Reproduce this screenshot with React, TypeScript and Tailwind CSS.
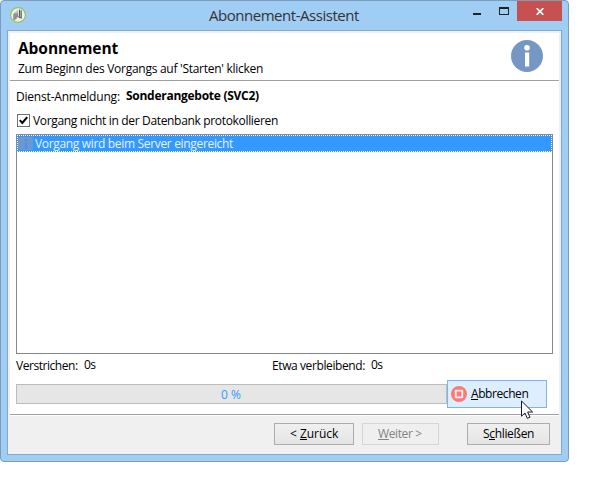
import type { ReactNode } from "react";

function AppIcon() {
  return (
    <svg className="ml-[9px] mt-1.5 h-4 w-4 shrink-0" viewBox="0 0 16 16">
      <circle cx="8" cy="8" r="7.4" fill="#f0f2ec" stroke="#93bf4e" strokeWidth="1.1" />
      <path d="M3.2 7.2 5 5.6l2 .4v5L4.8 13.2l-1.6-.8z" fill="#8f938f" />
      <path d="M5.2 5.4 7.6 2.8l.8.6v5.4L7 10.6z" fill="#bfc3bf" />
      <path d="M7.1 6.2v4" stroke="#5b605f" strokeWidth="0.9" />
      <path d="M9.6 2.6v7.2l1.6 1.6V3.4" fill="#d5d8d3" stroke="#3a403f" strokeWidth="0.9" />
      <path d="M7.8 9.4 10 11" stroke="#555b5a" strokeWidth="0.9" />
    </svg>
  );
}

function InfoIcon() {
  return (
    <svg className="mr-4 mt-[7px] h-8 w-8" viewBox="0 0 32 32">
      <circle cx="16" cy="16" r="16" fill="#7696c4" />
      <circle cx="16" cy="7.7" r="2.8" fill="#fff" />
      <rect x="14" y="12.5" width="4.2" height="14" rx="0.5" fill="#fff" />
    </svg>
  );
}

function Cursor() {
  return (
    <svg className="absolute left-[73px] top-[19px] z-10 h-[20px] w-[13px]" viewBox="0 0 13 20">
      <path
        d="M.5 1v15.3l3.4-3.4 2.4 5.4 2.7-1.1-2.4-5.2h5z"
        fill="#fff"
        stroke="#15152a"
        strokeWidth="1"
      />
    </svg>
  );
}

function PushButton({ className, children }: { className: string; children: ReactNode }) {
  return (
    <button
      className={`flex h-[22px] items-start border pt-[2px] text-[12px] leading-4 whitespace-nowrap ${className}`}
    >
      {children}
    </button>
  );
}

function Key({ children }: { children: string }) {
  return <span className="inline-block h-[14px] border-b border-current leading-4">{children}</span>;
}

export default function App() {
  return (
    <div className="h-[494px] w-[599px] overflow-hidden bg-white font-['Open_Sans','Noto_Sans',sans-serif] text-[12px] leading-4 text-black">
      <div className="flex h-[462px] w-[569px] flex-col rounded-[4px] border border-[#7b9db9] bg-[#a0cdf3]">
        <header className="flex h-[29px] shrink-0 items-start">
          <AppIcon />
          <h1 className="ml-[183px] mt-[4px] w-[160px] text-[15px] leading-5 tracking-[-0.47px] whitespace-nowrap text-[#333]">
            Abonnement-Assistent
          </h1>
          <div className="ml-[104px] mt-3 h-0.5 w-2 bg-[#222]" />
          <div className="ml-[18px] mt-1.5 h-2 w-2.5 border border-t-2 border-[#222]" />
          <div className="ml-2 flex h-5 w-[45px] items-center justify-center bg-[#c75050]">
            <svg className="h-[7px] w-2" viewBox="0 0 8 7">
              <path d="M.7.2 7.3 6.8M7.3.2.7 6.8" stroke="#fff" strokeWidth="1.7" />
            </svg>
          </div>
        </header>
        <main className="mx-1.5 flex h-[425px] shrink-0 flex-col border border-[#83aaca] bg-[#f0f0f0] px-0.5 pt-0.5">
          <section className="flex h-12 shrink-0 justify-between border-b border-[#a0a0a0] bg-white pl-2">
            <div>
              <h2 className="mt-[5px] text-[15.5px] leading-5 font-bold tracking-[-0.07px]">Abonnement</h2>
              <p className="mt-[3px] tracking-[-0.27px] whitespace-nowrap">
                Zum Beginn des Vorgangs auf 'Starten' klicken
              </p>
            </div>
            <InfoIcon />
          </section>
          <section className="flex h-[335px] shrink-0 flex-col bg-white pl-1.5">
            <div className="flex h-6 w-[537px] shrink-0 whitespace-nowrap">
              <span className="mt-2 w-[110px] tracking-[-0.2px]">Dienst-Anmeldung:</span>
              <b className="mt-[7px] tracking-[-0.27px]">Sonderangebote (SVC2)</b>
            </div>
            <label className="mt-[7px] ml-px flex h-4 shrink-0 whitespace-nowrap">
              <span className="mt-0.5 mr-[3px] flex h-[13px] w-[13px] items-center justify-center border border-[#707070] bg-white">
                <svg className="h-[9px] w-[9px]" viewBox="0 0 9 9">
                  <path d="M.8 4.2 3.3 7 8.2 1.2" fill="none" stroke="#000" strokeWidth="2" />
                </svg>
              </span>
              <span className="mt-px tracking-[-0.33px]">Vorgang nicht in der Datenbank protokollieren</span>
            </label>
            <div className="mt-[6px] h-[220px] w-[537px] shrink-0 border border-[#828790]">
              <div className="flex h-[17px] border border-dotted border-white bg-[#3399ff] text-[#e8f3ff]">
                <span className="mt-px flex h-[13px] w-[15px] shrink-0 items-center justify-center rounded-[2px] bg-[#6c97cf]">
                  <svg className="h-3 w-2" viewBox="0 0 8 12">
                    <path d="M4 1v2M4 5v6" fill="none" stroke="#3f93ee" strokeWidth="2" />
                  </svg>
                </span>
                <span className="ml-[2px] tracking-[-0.33px] whitespace-nowrap">Vorgang wird beim Server eingereicht</span>
              </div>
            </div>
            <div className="mt-[3px] flex h-[23px] shrink-0 whitespace-nowrap">
              <span className="mt-px w-[68px] tracking-[-0.45px]">Verstrichen:</span>
              <span className="w-[188px] tracking-[-0.5px]">0s</span>
              <span className="mt-px w-[99px] tracking-[-0.4px]">Etwa verbleibend:</span>
              <span className="tracking-[-0.5px]">0s</span>
            </div>
            <div className="flex h-[28px] shrink-0">
              <div className="mt-1 flex h-5 w-[431px] justify-center border border-[#bcbcbc] bg-[#e6e6e6] pt-0.5 pr-px text-[#3399ff]">
                0 %
              </div>
              <button className="relative flex h-7 w-[100px] items-start border border-[#7eb4ea] bg-[#dceeff] whitespace-nowrap">
                <svg className="mt-[5px] ml-[3px] h-4 w-4" viewBox="0 0 16 16">
                  <circle cx="8" cy="8" r="8" fill="#fa7b76" />
                  <rect x="4.7" y="4.7" width="6.6" height="6.6" rx="0.3" fill="none" stroke="#fdeff4" strokeWidth="1.8" />
                </svg>
                <span className="mt-[5px] ml-1 tracking-[-0.42px]">
                  <Key>A</Key>bbrechen
                </span>
                <Cursor />
              </button>
            </div>
          </section>
          <div className="-mt-0.5 h-0.5 shrink-0 border-t border-b border-t-[#a0a0a0] border-b-white" />
          <footer className="flex pt-[7px]">
            <PushButton className="ml-[264px] w-20 border-[#acacac] bg-linear-to-b from-[#f0f0f0] to-[#e5e5e5] pl-[15px] tracking-[-0.05px]">
              &lt;&nbsp;<Key>Z</Key>urück
            </PushButton>
            <PushButton className="ml-2 w-[77px] border-[#d5d5d5] bg-[#efefef] pl-[15px] tracking-[-0.38px] text-[#838383]">
              <Key>W</Key>eiter&nbsp;&gt;
            </PushButton>
            <PushButton className="ml-7 w-[83px] border-[#acacac] bg-linear-to-b from-[#f0f0f0] to-[#e5e5e5] pl-[15px] tracking-[-0.33px]">
              S<Key>c</Key>hließen
            </PushButton>
          </footer>
        </main>
      </div>
    </div>
  );
}
